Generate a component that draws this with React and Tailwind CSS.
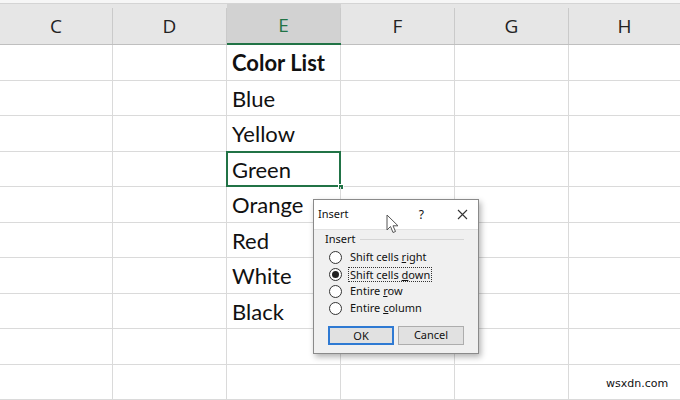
import React from "react";

const columns = ["C", "D", "E", "F", "G", "H"];
const widths = ["w-[113px]", "w-[114px]", "w-[114px]", "w-[114px]", "w-[114px]", "w-[111px]"];
const cells = ["Color List", "Blue", "Yellow", "Green", "Orange", "Red", "White", "Black", "", ""];

const Radio = ({ checked }) => (
  <span className="flex h-[13px] w-[13px] items-center justify-center rounded-full border border-[#333] bg-white">
    {checked && <span className="h-[7px] w-[7px] rounded-full bg-[#222]" />}
  </span>
);

const options = [
  { pre: "Shift cells ", key: "r", post: "ight" },
  { pre: "Shift cells ", key: "d", post: "own", checked: true },
  { pre: "Entire ", key: "r", post: "ow" },
  { pre: "Entire ", key: "c", post: "olumn" },
];

const InsertDialog = () => (
  <div className="absolute left-[313px] top-[199px] w-[166px] border border-[#8a8a8a] bg-[#f0f0f0] shadow-[2px_3px_6px_rgba(0,0,0,0.3)] font-['Noto_Sans',sans-serif] text-[11px] text-[#111]">
    <div className="flex h-[30px] items-center bg-white pl-[4px] pr-[10px] border-b border-[#e2e2e2]">
      <span className="flex-1">Insert</span>
      <span className="mr-[33px] text-[12px]">?</span>
      <svg width="11" height="11" viewBox="0 0 11 11" className="stroke-[#333]">
        <path d="M1 1 L10 10 M10 1 L1 10" strokeWidth="1.1" />
      </svg>
    </div>
    <div className="px-[14px] pt-[2px] pb-[8px]">
      <div className="flex h-[15px] items-center gap-[4px] -ml-[3px]">
        <span>Insert</span>
        <span className="h-px flex-1 bg-[#d5d5d5]" />
      </div>
      <div className="mt-[2px] flex flex-col pl-[1px]">
        {options.map((o, i) => (
          <div key={i} className="flex h-[17px] items-center gap-[6px]">
            <Radio checked={o.checked} />
            <span className={o.checked ? "border border-dotted border-[#333] px-[1px] leading-[13px]" : "px-[2px]"}>
              {o.pre}
              <span className="underline">{o.key}</span>
              {o.post}
            </span>
          </div>
        ))}
      </div>
      <div className="mt-[9px] flex justify-between">
        <button className="h-[19px] w-[66px] border-2 border-[#2f7ad3] bg-[#e1e1e1] text-[11px]">OK</button>
        <button className="h-[19px] w-[66px] border border-[#adadad] bg-[#e1e1e1] text-[11px]">Cancel</button>
      </div>
    </div>
  </div>
);

const Cursor = () => (
  <svg className="absolute left-[386px] top-[214px]" width="14" height="21" viewBox="0 0 14 21">
    <path d="M1 1 L1 16 L4.5 12.5 L7 18.5 L9.5 17.5 L7 11.8 L12 11.8 Z" fill="white" stroke="#555" strokeWidth="1" strokeLinejoin="round" />
  </svg>
);

export default function App() {
  return (
    <div className="relative h-[400px] w-[680px] overflow-hidden bg-white">
      {/* formula bar edge */}
      <div className="h-[4px] border-b border-[#d4d4d4] bg-[#f6f6f6]" />
      {/* column headers */}
      <div className="flex h-[41px] border-b border-[#bfbfbf] bg-[#e6e6e6] font-['Open_Sans',sans-serif] text-[19px] text-[#222]">
        {columns.map((c, i) => (
          <div
            key={c}
            className={`${widths[i]} flex shrink-0 items-end pt-[4px] ${c === "E" ? "bg-[#d2d2d2] border-b-2 border-[#217346] -mb-px" : ""}`}
          >
            <div className={`flex h-full w-full items-center justify-center ${i < 5 ? "border-r border-[#cacaca]" : ""} ${c === "E" ? "text-[#217346]" : ""}`}>
              {c}
            </div>
          </div>
        ))}
      </div>
      {/* rows */}
      {cells.map((text, r) => (
        <div key={r} className="flex h-[35.5px] border-b border-[#dadada] font-['Lato',sans-serif] text-[22px] text-[#111]">
          {columns.map((c, i) => (
            <div
              key={c}
              className={`${widths[i]} relative flex shrink-0 items-center pl-[5px] pt-[1px] ${i < 5 ? "border-r border-[#dadada]" : ""} ${r === 0 && c === "E" ? "font-bold" : ""}`}
            >
              {c === "E" ? text : ""}
              {c === "E" && r === 3 && (
                <>
                  <div className="absolute -left-px -top-px -right-px -bottom-px border-2 border-[#217346]" />
                  <div className="absolute -bottom-[4px] -right-[4px] h-[6px] w-[6px] border border-white bg-[#217346]" />
                </>
              )}
            </div>
          ))}
        </div>
      ))}
      <InsertDialog />
      <Cursor />
      <div className="absolute left-[606px] top-[376px] font-['DejaVu_Sans',sans-serif] text-[11px] text-[#111]">wsxdn.com</div>
    </div>
  );
}
